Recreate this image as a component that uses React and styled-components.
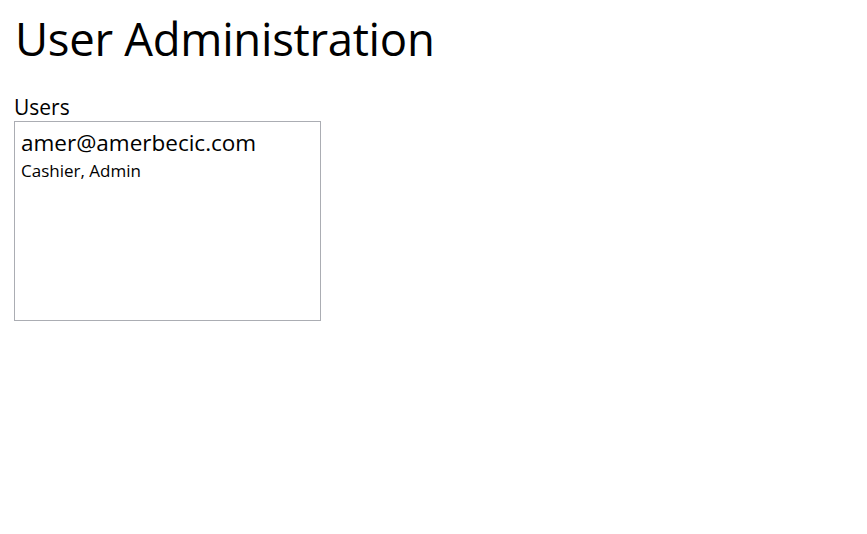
import React from 'react';
import styled, { createGlobalStyle } from 'styled-components';

const GlobalStyle = createGlobalStyle`
  html, body {
    margin: 0;
    padding: 0;
    background: #ffffff;
  }
  body {
    font-family: "Open Sans", "Noto Sans", sans-serif;
    color: #000000;
  }
`;

const Page = styled.div`
  padding: 6px 14px;
  display: flex;
  flex-direction: column;
  align-items: flex-start;
`;

const Title = styled.h1`
  margin: 0 0 0 1px;
  font-size: 45.5px;
  font-weight: 400;
  line-height: 64px;
  letter-spacing: -0.3px;
`;

const SectionLabel = styled.div`
  margin-top: 25px;
  font-size: 21px;
  line-height: 24px;
`;

const UserList = styled.div`
  box-sizing: border-box;
  margin-top: 2px;
  width: 307px;
  height: 200px;
  border: 1px solid #abadb3;
  padding: 7px 6px;
  display: flex;
  flex-direction: column;
`;

const UserItem = styled.div`
  display: flex;
  flex-direction: column;
`;

const UserEmail = styled.div`
  font-size: 22.5px;
  line-height: 28px;
`;

const UserRoles = styled.div`
  font-size: 17px;
  line-height: 27px;
`;

const users = [
  { email: 'amer@amerbecic.com', roles: ['Cashier', 'Admin'] },
];

const App = () => {
  return (
    <>
      <GlobalStyle />
      <Page>
        <Title>User Administration</Title>
        <SectionLabel>Users</SectionLabel>
        <UserList>
          {users.map((u) => (
            <UserItem key={u.email}>
              <UserEmail>{u.email}</UserEmail>
              <UserRoles>{u.roles.join(', ')}</UserRoles>
            </UserItem>
          ))}
        </UserList>
      </Page>
    </>
  );
};

export default App;
